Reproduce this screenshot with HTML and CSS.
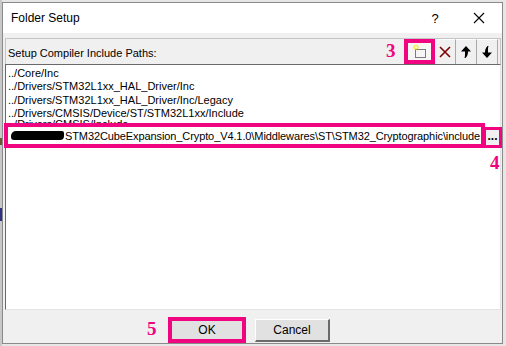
FILE: index.html
```html
<!DOCTYPE html>
<html>
<head>
<meta charset="utf-8">
<link rel="stylesheet" href="styles.css">
</head>
<body>
<div class="bg-strip"></div>
<div class="dialog">
  <div class="titlebar">
    <span class="title">Folder Setup</span>
    <span class="help">?</span>
    <span class="close">
      <svg width="12" height="12" viewBox="0 0 12 12"><path d="M1 1L11 11M11 1L1 11" stroke="#000" stroke-width="1.1"/></svg>
    </span>
  </div>
  <div class="content">
    <div class="header">
      <span class="label">Setup Compiler Include Paths:</span>
      <span class="num num3">3</span>
      <div class="tools">
        <div class="hl">
          <div class="tbtn">
            <svg width="16" height="16" viewBox="0 0 16 16">
              <rect x="3.5" y="5.5" width="10" height="8" fill="none" stroke="#000" stroke-dasharray="1 1"/>
              <path d="M4 0.5V6M1.2 3.2H6.8M2 1.2L6 5.2M6 1.2L2 5.2" stroke="#f5e600" stroke-width="1"/>
              <rect x="3" y="2.5" width="2" height="1.5" fill="#fff"/>
            </svg>
          </div>
        </div>
        <div class="tbtn">
          <svg width="14" height="14" viewBox="0 0 14 14"><path d="M2 2L12 12M12 2L2 12" stroke="#800000" stroke-width="1.6"/></svg>
        </div>
        <div class="tbtn">
          <svg width="12" height="14" viewBox="0 0 12 14"><path d="M6 1L11 6.5H8C8 9 7.5 11 5.5 13H4.5C5.2 11 5 9 5 6.5H1Z" fill="#000"/></svg>
        </div>
        <div class="tbtn">
          <svg width="12" height="14" viewBox="0 0 12 14"><path d="M6 13L11 7.5H7C7 5 6.8 3 7.5 1H6.5C4.5 3 4 5 4 7.5H1Z" fill="#000"/></svg>
        </div>
      </div>
    </div>
    <div class="list">
      <div class="item">../Core/Inc</div>
      <div class="item">../Drivers/STM32L1xx_HAL_Driver/Inc</div>
      <div class="item">../Drivers/STM32L1xx_HAL_Driver/Inc/Legacy</div>
      <div class="item">../Drivers/CMSIS/Device/ST/STM32L1xx/Include</div>
      <div class="item item5">../Drivers/CMSIS/Include</div>
      <div class="edit"><span class="blob"></span><span class="etext">STM32CubeExpansion_Crypto_V4.1.0\Middlewares\ST\STM32_Cryptographic\include</span></div>
      <div class="browse">...</div>
      <span class="num num4">4</span>
    </div>
    <div class="footer">
      <span class="num num5">5</span>
      <div class="okhl"><div class="btn ok">OK</div></div>
      <div class="btn cancel">Cancel</div>
    </div>
  </div>
</div>
</body>
</html>
```

FILE: styles.css
```css
html, body {
  margin: 0;
  padding: 0;
}
body {
  width: 506px;
  height: 346px;
  overflow: hidden;
  background: #e6e6e6;
  position: relative;
  font-family: "Liberation Sans", Arial, sans-serif;
}
.bg-strip {
  position: absolute;
  left: 0;
  top: 0;
  width: 2px;
  height: 346px;
  background: linear-gradient(#c8c8c8 0 40%, #6a5a30 40% 42%, #c8c8c8 42% 60%, #303080 60% 64%, #c8c8c8 64%);
}
.dialog {
  position: relative;
  margin: 2px 0 0 2px;
  width: 501px;
  height: 342px;
  box-sizing: border-box;
  border: 1px solid #8a8a8a;
  background: #f0f0f0;
  display: flex;
  flex-direction: column;
}
.titlebar {
  flex: none;
  height: 30px;
  background: #fff;
  display: flex;
  align-items: center;
  font-size: 12px;
  color: #000;
}
.title {
  margin-left: 8px;
  flex: 1;
}
.help {
  width: 14px;
  text-align: center;
  margin-right: 31px;
  font-size: 13px;
}
.close {
  width: 12px;
  height: 12px;
  margin-right: 17px;
  display: flex;
}
.content {
  padding: 5px 1px 0 2px;
  display: flex;
  flex-direction: column;
  flex: none;
}
.header {
  flex: none;
  position: relative;
  height: 26px;
  box-sizing: border-box;
  border: 1px solid #c4c4c4;
  border-bottom: none;
  display: flex;
  align-items: center;
  font-size: 11px;
}
.label {
  flex: 1;
  padding-left: 2px;
  position: relative;
  top: 1px;
}
.tools {
  display: flex;
  align-items: stretch;
  height: 25px;
  margin-right: 2px;
}
.hl {
  border: 4px solid #f0047f;
  display: flex;
  box-sizing: border-box;
  width: 31px;
}
.hl .tbtn {
  flex: 1;
  border: none;
  background: #f6f6f6;
}
.tbtn {
  width: 21px;
  box-sizing: border-box;
  border-right: 1px solid #a8a8a8;
  border-top: 1px solid #fff;
  display: flex;
  align-items: center;
  justify-content: center;
  background: #f0f0f0;
}
.list {
  flex: none;
  position: relative;
  height: 246px;
  box-sizing: border-box;
  background: #fff;
  border-top: 1px solid #696969;
  border-left: 1px solid #696969;
  border-right: 1px solid #e3e3e3;
  border-bottom: 1px solid #e3e3e3;
  padding: 2px 0 0 2px;
  font-size: 11px;
  color: #000;
}
.item {
  height: 13.4px;
  line-height: 13.4px;
  white-space: nowrap;
}
.item5 {
  margin-top: -3px;
}
.edit {
  position: absolute;
  left: -2px;
  top: 58px;
  width: 481px;
  height: 25px;
  box-sizing: border-box;
  border: 4px solid #f0047f;
  background: #fff;
  display: flex;
  align-items: center;
  padding-left: 3px;
  white-space: nowrap;
  overflow: hidden;
}
.blob {
  display: inline-block;
  width: 53px;
  height: 9px;
  background: #000;
  border-radius: 5px 2px 4px 3px;
  margin-right: 1px;
  flex: none;
}
.etext {
  letter-spacing: -0.1px;
}
.browse {
  position: absolute;
  left: 477px;
  top: 62px;
  width: 19px;
  height: 21px;
  box-sizing: border-box;
  border: 3px solid #f0047f;
  background: #f0f0f0;
  font-weight: bold;
  font-size: 12px;
  text-align: center;
  line-height: 12px;
}
.num {
  position: absolute;
  color: #f0047f;
  font-family: "Liberation Serif", "Times New Roman", serif;
  font-weight: bold;
  font-size: 19px;
  line-height: 19px;
}
.num3 {
  left: 380px;
  top: 2px;
}
.num4 {
  left: 484px;
  top: 88px;
}
.num5 {
  left: 142px;
  top: 9px;
}
.footer {
  flex: none;
  position: relative;
  display: flex;
  padding-top: 7px;
  padding-left: 163px;
  gap: 9px;
  align-items: flex-start;
}
.okhl {
  border: 4px solid #f0047f;
  display: flex;
}
.btn {
  height: 22px;
  box-sizing: border-box;
  background: #e1e1e1;
  border: 1px solid #adadad;
  font-size: 12px;
  display: flex;
  align-items: center;
  justify-content: center;
}
.ok {
  width: 70px;
  height: 18px;
  border-color: #e1e1e1;
}
.cancel {
  width: 75px;
  height: 23px;
  margin-top: 2px;
  border-right: 2px solid #6a6a6a;
  border-bottom: 2px solid #6a6a6a;
  border-left: 1px solid #fff;
  border-top: 1px solid #fff;
}
```
